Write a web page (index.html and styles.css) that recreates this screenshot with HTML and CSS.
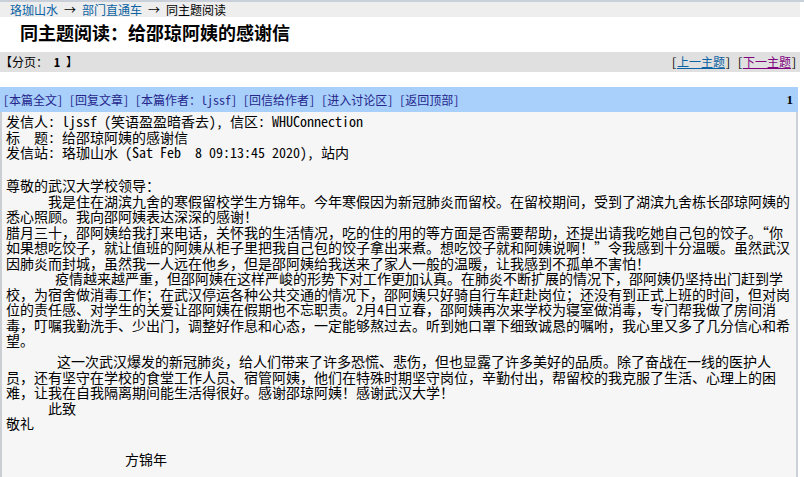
FILE: index.html
```html
<!DOCTYPE html>
<html lang="zh-CN">
<head>
<meta charset="utf-8">
<title>同主题阅读：给邵琼阿姨的感谢信</title>
<link rel="stylesheet" href="styles.css">
</head>
<body>
<div class="page">
  <div class="crumbs">
    <a class="crumb" href="#">珞珈山水</a><span class="arrow">→</span><a class="crumb" href="#">部门直通车</a><span class="arrow">→</span><span>同主题阅读</span>
  </div>
  <h1 class="title">同主题阅读：给邵琼阿姨的感谢信</h1>
  <div class="pager">
    <span class="pages">【分页： <b>1</b> 】</span>
    <span class="nav">[<a class="navlink" href="#">上一主题</a>] [<a class="navlink visited" href="#">下一主题</a>]</span>
  </div>
  <div class="post">
    <div class="post-bar">
      <div class="actions"><a href="#">[本篇全文]</a> <a href="#">[回复文章]</a> <a href="#">[本篇作者：ljssf]</a> <a href="#">[回信给作者]</a> <a href="#">[进入讨论区]</a> <a href="#">[返回顶部]</a></div>
      <span class="num">1</span>
    </div>
    <div class="post-body">
      <div class="head">
        <div class="ln">发信人: ljssf (笑语盈盈暗香去), 信区: WHUConnection</div>
        <div class="ln">标  题: 给邵琼阿姨的感谢信</div>
        <div class="ln">发信站: 珞珈山水 (Sat Feb  8 09:13:45 2020), 站内</div>
      </div>
      <div class="para">
        <div class="ln">尊敬的武汉大学校领导：</div>
        <div class="ln in42">我是住在湖滨九舍的寒假留校学生方锦年。今年寒假因为新冠肺炎而留校。在留校期间，受到了湖滨九舍栋长邵琼阿姨的</div>
        <div class="ln">悉心照顾。我向邵阿姨表达深深的感谢！</div>
        <div class="ln">腊月三十，邵阿姨给我打来电话，关怀我的生活情况，吃的住的用的等方面是否需要帮助，还提出请我吃她自己包的饺子。“你</div>
        <div class="ln">如果想吃饺子，就让值班的阿姨从柜子里把我自己包的饺子拿出来煮。想吃饺子就和阿姨说啊！”令我感到十分温暖。虽然武汉</div>
        <div class="ln">因肺炎而封城，虽然我一人远在他乡，但是邵阿姨给我送来了家人一般的温暖，让我感到不孤单不害怕！</div>
        <div class="ln in49">疫情越来越严重，但邵阿姨在这样严峻的形势下对工作更加认真。在肺炎不断扩展的情况下，邵阿姨仍坚持出门赶到学</div>
        <div class="ln">校，为宿舍做消毒工作；在武汉停运各种公共交通的情况下，邵阿姨只好骑自行车赶赴岗位；还没有到正式上班的时间，但对岗</div>
        <div class="ln">位的责任感、对学生的关爱让邵阿姨在假期也不忘职责。2月4日立春，邵阿姨再次来学校为寝室做消毒，专门帮我做了房间消</div>
        <div class="ln">毒，叮嘱我勤洗手、少出门，调整好作息和心态，一定能够熬过去。听到她口罩下细致诚恳的嘱咐，我心里又多了几分信心和希</div>
        <div class="ln">望。</div>
      </div>
      <div class="para gap-s">
        <div class="ln in51">这一次武汉爆发的新冠肺炎，给人们带来了许多恐慌、悲伤，但也显露了许多美好的品质。除了奋战在一线的医护人</div>
        <div class="ln">员，还有坚守在学校的食堂工作人员、宿管阿姨，他们在特殊时期坚守岗位，辛勤付出，帮留校的我克服了生活、心理上的困</div>
        <div class="ln">难，让我在自我隔离期间能生活得很好。感谢邵琼阿姨！感谢武汉大学！</div>
        <div class="ln in42">此致</div>
        <div class="ln">敬礼</div>
      </div>
      <div class="para gap-l">
        <div class="ln in119">方锦年</div>
      </div>
    </div>
  </div>
</div>
</body>
</html>
```
FILE: styles.css
```css
html, body {
  margin: 0;
  padding: 0;
  background: #ffffff;
}
body {
  font-family: "Noto Sans Mono CJK SC", "Noto Sans CJK SC", "DejaVu Sans Mono", monospace;
  color: #000;
  border-top: 2px solid #c9d0da;
}
a {
  text-decoration: none;
}
.page {
  width: 800px;
}
.crumbs {
  background: #eeeeee;
  height: 15px;
  line-height: 15px;
  font-size: 12px;
  padding-left: 10px;
  white-space: nowrap;
}
.crumb {
  color: #0b63a3;
}
.arrow {
  display: inline-block;
  width: 24px;
  text-align: center;
}
.title {
  margin: 4px 0 9px 0;
  padding-left: 20px;
  font-family: "Noto Sans CJK SC", sans-serif;
  font-size: 18px;
  line-height: 22px;
  font-weight: bold;
}
.pager {
  display: flex;
  justify-content: space-between;
  align-items: center;
  height: 20px;
  background: #e0e0e0;
  font-size: 12px;
  line-height: 20px;
  padding: 0 3px 0 0;
  white-space: pre;
}
.pages b {
  font-weight: bold;
}
.navlink {
  color: #0b63a3;
  text-decoration: underline;
}
.navlink.visited {
  color: #800080;
}
.post {
  margin-top: 15px;
  width: 798px;
}
.post-bar {
  display: flex;
  justify-content: space-between;
  align-items: center;
  height: 25px;
  background: #a8d0fb;
  font-size: 12px;
  line-height: 25px;
  padding: 0 5px 0 3px;
  white-space: pre;
}
.actions a {
  color: #25258c;
}
.num {
  font-family: "Liberation Serif", serif;
  font-weight: bold;
  font-size: 13px;
}
.post-body {
  box-sizing: border-box;
  background: #f6f6f6;
  border-left: 2px solid #cbcfd4;
  border-right: 2px solid #cbd1d7;
  padding: 2px 0 0 4px;
  font-size: 14px;
  line-height: 15.5px;
  height: 365px;
  overflow: hidden;
}
.ln {
  white-space: pre;
  height: 15.5px;
}
.para {
  margin-top: 17.5px;
}
.para.gap-s {
  margin-top: 5.5px;
}
.para.gap-l {
  margin-top: 20.5px;
}
.in42 { padding-left: 42px; }
.in49 { padding-left: 49px; }
.in51 { padding-left: 51px; }
.in119 { padding-left: 119px; }
```
